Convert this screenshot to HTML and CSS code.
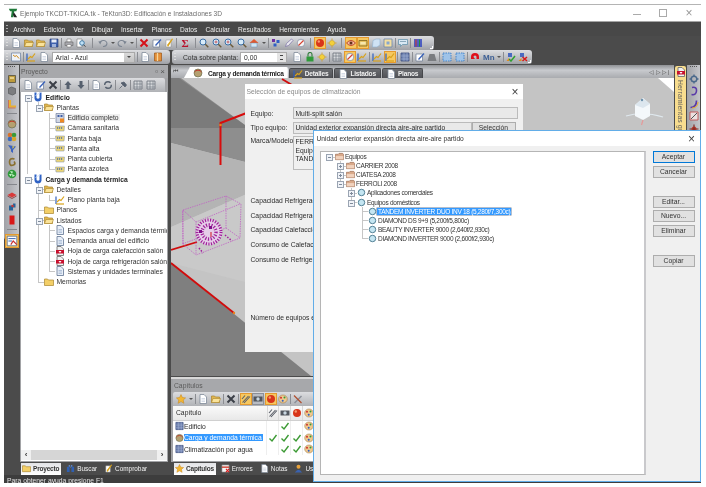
FILE: index.html
```html
<!DOCTYPE html>
<html lang="es">
<head>
<meta charset="utf-8">
<title>TeKton3D</title>
<link rel="stylesheet" href="styles.css">
</head>
<body>
<svg class="defs" aria-hidden="true">
  <symbol id="doc" viewBox="0 0 10 10"><path d="M2 .5h4l2.5 2.500v6.500h-6.500z" fill="#fff" stroke="#7f8a99" stroke-width=".8"/><path d="M3.500 4.500h3.500M3.500 6h3.500M3.500 7.500h3.500" stroke="#b8c4d6" stroke-width=".6"/></symbol>
  <symbol id="ldoc" viewBox="0 0 10 10"><path d="M2 .5h4l2.500 2.500v6.500h-6.500z" fill="#e9eff8" stroke="#5f7493" stroke-width=".8"/><path d="M3.500 4.500h3.500M3.500 6h3.500M3.500 7.500h3.500" stroke="#8ea4c6" stroke-width=".6"/></symbol>
  <symbol id="rdoc" viewBox="0 0 10 10"><path d="M2 .5h4l2.500 2.500v6.500h-6.500z" fill="#f2f2f2" stroke="#666" stroke-width=".8"/><path d="M1 4h8v3.500h-8z" fill="#c8102e"/><path d="M3.500 5l1.500 2 1.500-2z" fill="#fff"/></symbol>
  <symbol id="fold" viewBox="0 0 10 10"><path d="M.5 2h3l1 1h5v5.500h-9z" fill="#f3cf68" stroke="#a9852e" stroke-width=".7"/></symbol>
  <symbol id="open" viewBox="0 0 10 10"><path d="M.5 2h3l1 1h4v5.500h-8z" fill="#e0b650" stroke="#a9852e" stroke-width=".7"/><path d="M2 4.500h7.500l-1.500 4h-7.500z" fill="#fae39a" stroke="#a9852e" stroke-width=".6"/></symbol>
  <symbol id="pfold" viewBox="0 0 10 10"><path d="M.5 2.500h3l1-1h4l1 1v6h-9z" fill="#d9a98a" stroke="#96684e" stroke-width=".7"/><path d="M.8 4.500h8.400v3.700h-8.400z" fill="#f1d2bd"/></symbol>
  <symbol id="save" viewBox="0 0 10 10"><path d="M1 1h8v8h-8z" fill="#3f61ad" stroke="#23386e" stroke-width=".6"/><path d="M2.500 1.500h5v3h-5z" fill="#e8edf7"/><path d="M3 6h4v3h-4z" fill="#9fb3dc"/></symbol>
  <symbol id="print" viewBox="0 0 10 10"><path d="M3 1h4v3h-4z" fill="#fff" stroke="#777" stroke-width=".6"/><path d="M1 4h8v3.500h-8z" fill="#a8a8ae" stroke="#666" stroke-width=".6"/><path d="M3 6.500h4v2.500h-4z" fill="#fff" stroke="#777" stroke-width=".6"/></symbol>
  <symbol id="prev" viewBox="0 0 10 10"><path d="M1 1h5v8h-5z" fill="#fff" stroke="#777" stroke-width=".6"/><circle cx="6" cy="5" r="2.300" fill="#bfe0f5" stroke="#2a6a9a" stroke-width=".8"/><path d="M7.500 6.700l2 2" stroke="#444" stroke-width="1"/></symbol>
  <symbol id="undo" viewBox="0 0 10 10"><path d="M2 5a3.500 3 0 1 1 3 3.500" fill="none" stroke="#7c8592" stroke-width="1.100"/><path d="M.3 3.500l3.500-.5-1.500 3.500z" fill="#7c8592"/></symbol>
  <symbol id="redo" viewBox="0 0 10 10"><path d="M8 5a3.500 3 0 1 0-3 3.500" fill="none" stroke="#7c8592" stroke-width="1.100"/><path d="M9.700 3.500l-3.500-.5 1.500 3.500z" fill="#7c8592"/></symbol>
  <symbol id="xr" viewBox="0 0 10 10"><path d="M1.500 1.500l7 7M8.500 1.500l-7 7" stroke="#d5121a" stroke-width="2"/></symbol>
  <symbol id="xd" viewBox="0 0 10 10"><path d="M1.500 1.500l7 7M8.500 1.500l-7 7" stroke="#3c4048" stroke-width="2"/></symbol>
  <symbol id="edit" viewBox="0 0 10 10"><path d="M1 2h6.500v7h-6.500z" fill="#fff" stroke="#6a7a94" stroke-width=".7"/><path d="M3 7l5.500-6 1 1-5.500 6z" fill="#3b63b8"/></symbol>
  <symbol id="chk" viewBox="0 0 10 10"><path d="M2 2h5v7h-5z" fill="#fff" stroke="#888" stroke-width=".5"/><path d="M3 7l1 2 5-8-1-.500z" fill="#d8a21a"/></symbol>
  <symbol id="gchk" viewBox="0 0 10 10"><path d="M1.500 5.500l2.500 2.500 4.500-6" fill="none" stroke="#3c9a34" stroke-width="1.400"/></symbol>
  <symbol id="zoom" viewBox="0 0 10 10"><circle cx="4" cy="4" r="3" fill="#d8ecfa" stroke="#3a6ea5" stroke-width="1"/><path d="M6.300 6.300l3 3" stroke="#6a5a3a" stroke-width="1.400"/></symbol>
  <symbol id="zoomp" viewBox="0 0 10 10"><circle cx="4" cy="4" r="3" fill="#d8ecfa" stroke="#3a6ea5" stroke-width="1"/><path d="M6.300 6.300l3 3" stroke="#6a5a3a" stroke-width="1.400"/><path d="M2.500 4h3M4 2.500v3" stroke="#c03030" stroke-width=".7"/></symbol>
  <symbol id="home" viewBox="0 0 10 10"><path d="M.5 5l4.500-4 4.500 4" fill="#e05a30"/><path d="M2 5h6v4h-6z" fill="#cfe6f5" stroke="#6a8fae" stroke-width=".5"/></symbol>
  <symbol id="color" viewBox="0 0 10 10"><path d="M1 1h3v3h-3z" fill="#7030a0"/><path d="M5.500 2h3v3h-3z" fill="#2f5fc4"/><path d="M2.500 5.500h3v3h-3z" fill="#2f5fc4"/></symbol>
  <symbol id="pen" viewBox="0 0 10 10"><path d="M1.500 8.500l1-3 5-4.500 1.500 1.500-4.500 5z" fill="#e9e9ef" stroke="#7a6ea5" stroke-width=".7"/></symbol>
  <symbol id="eras" viewBox="0 0 10 10"><circle cx="5" cy="5" r="3.800" fill="#f5f5f5" stroke="#7f8aa0" stroke-width=".7"/><path d="M2.500 7.500l5-5" stroke="#d84030" stroke-width="1.100"/></symbol>
  <symbol id="ball" viewBox="0 0 10 10"><circle cx="5" cy="5" r="4" fill="#d8351a"/><circle cx="3.800" cy="3.500" r="1.200" fill="#f39a70"/></symbol>
  <symbol id="sun" viewBox="0 0 10 10"><circle cx="5" cy="5" r="2.600" fill="#f4d03a" stroke="#c79a1a" stroke-width=".5"/><path d="M5 .5v1.500M5 8v1.500M.5 5h1.500M8 5h1.500" stroke="#d49a1a" stroke-width=".8"/></symbol>
  <symbol id="eye" viewBox="0 0 10 10"><path d="M.5 5q4.500-5 9 0q-4.500 5-9 0z" fill="#f6b7a0" stroke="#b23a20" stroke-width=".9"/><circle cx="5" cy="5" r="1.500" fill="#63301a"/></symbol>
  <symbol id="box" viewBox="0 0 10 10"><path d="M1 2.500h8v5.500h-8z" fill="#e4c060" stroke="#7f6420" stroke-width=".8"/><path d="M2.300 4h5.400v2.500h-5.400z" fill="#f7e7ae"/></symbol>
  <symbol id="cube" viewBox="0 0 10 10"><path d="M2 2.500l3-1.500h4v6l-3 2h-4.500z" fill="#cfe2f4" stroke="#8fb0cf" stroke-width=".6"/></symbol>
  <symbol id="lbox" viewBox="0 0 10 10"><path d="M1 1h8v8h-8z" fill="#f4dfa0" stroke="#6a86ad" stroke-width=".8"/><path d="M3.500 3.500h3v3h-3z" fill="#86a7cf"/></symbol>
  <symbol id="chat" viewBox="0 0 10 10"><path d="M.5 1.500h9v5h-5l-2 2v-2h-2z" fill="#d9e8f3" stroke="#5a8ca8" stroke-width=".7"/><path d="M2.500 3.500h5" stroke="#3d6a84" stroke-width="1" stroke-dasharray="1 1"/></symbol>
  <symbol id="lay" viewBox="0 0 10 10"><path d="M1 2h8M1 4h8M1 6h8M1 8h8" stroke="#2a3fc0" stroke-width="1.300"/><path d="M3 1.500v7" stroke="#d03030" stroke-width="1"/><path d="M6.500 1.500v7" stroke="#209040" stroke-width="1"/></symbol>
  <symbol id="plan" viewBox="0 0 10 10"><path d="M.5 1h9v8h-9z" fill="#eef2f8" stroke="#6b7f9e" stroke-width=".7"/><path d="M2 3l2 1.500 1.500-1 2.500 3" fill="none" stroke="#d08a1a" stroke-width="1"/></symbol>
  <symbol id="chart" viewBox="0 0 10 10"><path d="M1 9v-7.500" stroke="#3060c0" stroke-width="1.200"/><path d="M1 9h8" stroke="#d8a21a" stroke-width="1.200"/><path d="M2 7l2.500-2.500 1.500 1 3-4" fill="none" stroke="#d8a21a" stroke-width="1.200"/></symbol>
  <symbol id="book" viewBox="0 0 10 10"><path d="M1.500 1h7v8h-7z" fill="#e4903a" stroke="#9c5616" stroke-width=".7"/><path d="M4.500 1v8" stroke="#f6d59a" stroke-width="1.300"/></symbol>
  <symbol id="lock" viewBox="0 0 10 10"><path d="M1.500 4.500h7v5h-7z" fill="#2f9a3a"/><path d="M3 4.500v-2a2 2 0 0 1 4 0v2" fill="none" stroke="#2f7a3a" stroke-width="1.100"/></symbol>
  <symbol id="arr" viewBox="0 0 10 10"><path d="M5 1l3.500 4h-2v4h-3v-4h-2z" fill="#56606e"/></symbol>
  <symbol id="arrd" viewBox="0 0 10 10"><path d="M5 9l3.500-4h-2v-4h-3v4h-2z" fill="#56606e"/></symbol>
  <symbol id="refr" viewBox="0 0 10 10"><circle cx="5" cy="5" r="3.300" fill="none" stroke="#56606e" stroke-width="1.400" stroke-dasharray="8 2"/></symbol>
  <symbol id="pin" viewBox="0 0 10 10"><path d="M1.500 8.500l3-3M3 3l4 4 1.500-2-2.500-3z" fill="#56606e" stroke="#56606e" stroke-width=".8"/></symbol>
  <symbol id="grid" viewBox="0 0 10 10"><path d="M1 1h8v8h-8z" fill="#d8dadd" stroke="#6a6f78" stroke-width=".8"/><path d="M1 4h8M1 7h8M4 1v8M7 1v8" stroke="#6a6f78" stroke-width=".6"/></symbol>
  <symbol id="bgrid" viewBox="0 0 10 10"><path d="M1 1h8v8h-8z" fill="#6f82b0" stroke="#3d4f80" stroke-width=".8"/><path d="M1 4h8M1 7h8M4 1v8M7 1v8" stroke="#a9b8d8" stroke-width=".5"/></symbol>
  <symbol id="mag" viewBox="0 0 10 10"><path d="M1 5a4 4 0 0 1 8 0v2h-2.500v-2a1.500 1.500 0 0 0-3 0l1.500 2h-4z" fill="#e0101a"/></symbol>
  <symbol id="bdash" viewBox="0 0 10 10"><path d="M1 1h8v8h-8z" fill="#9fc3e8" stroke="#3a7fc8" stroke-width=".9" stroke-dasharray="1.500 1"/></symbol>
  <symbol id="gray" viewBox="0 0 10 10"><path d="M2.500 2h5l2 7h-9z" fill="#7a7c80"/></symbol>
  <symbol id="redx" viewBox="0 0 10 10"><path d="M2 1h4v4h-4z" fill="#4a6ac0"/><path d="M4.500 5l4.500 4M9 5l-4.500 4" stroke="#d81818" stroke-width="1.500"/><path d="M.5 9h3v-3z" fill="#e08a20"/></symbol>
  <symbol id="grnc" viewBox="0 0 10 10"><path d="M2 1h4v4h-4z" fill="#4a6ac0"/><path d="M3 7l2 2 4-5" fill="none" stroke="#2fa030" stroke-width="1.500"/><path d="M.5 9h2.500v-3z" fill="#e08a20"/></symbol>
  <symbol id="bld" viewBox="0 0 10 10"><path d="M1 .5h8v9h-8z" fill="#d2d8e4" stroke="#5a6c90" stroke-width=".6"/><path d="M2.500 2h2v2h-2zM5.500 2h2v2h-2z" fill="#3e5fa8"/><path d="M5 5.500h4v4h-4z" fill="#ef8a24"/></symbol>
  <symbol id="planta" viewBox="0 0 10 10"><path d="M.5 3h9l-.5 5h-8z" fill="#eed673" stroke="#8a9ab2" stroke-width=".6"/><path d="M2 5h6" stroke="#4e6fa8" stroke-width="1.400" stroke-dasharray="1.200 .8"/></symbol>
  <symbol id="proj" viewBox="0 0 10 10"><path d="M1.500 .5h2v5.500q1.500 1.500 3 0v-5.500h2v6q-.5 3-3.500 3t-3.500-3z" fill="#2f62c4"/><path d="M2.500 3.500l5-3" stroke="#cfe0fa" stroke-width=".9"/></symbol>
  <symbol id="node" viewBox="0 0 10 10"><circle cx="5" cy="5" r="3.600" fill="#c5e6f2" stroke="#43748a" stroke-width="1"/></symbol>
  <symbol id="star" viewBox="0 0 10 10"><path d="M5 .5l1.400 3 3.200.4-2.400 2.100.7 3.300-2.900-1.700-2.900 1.700.7-3.300-2.400-2.100 3.200-.4z" fill="#f2b632" stroke="#c78418" stroke-width=".5"/></symbol>
  <symbol id="tag" viewBox="0 0 10 10"><path d="M1 1h8v8h-8z" fill="#f4f4f4" stroke="#777" stroke-width=".6"/><path d="M1 3.500h8" stroke="#cf3a2a" stroke-width="1.500"/><path d="M5.500 5.500l3.500 3.500M9 5.500l-3.500 3.500" stroke="#d81818" stroke-width="1.200"/></symbol>
  <symbol id="usr" viewBox="0 0 10 10"><circle cx="5" cy="3" r="2.200" fill="#e8a23a"/><path d="M1 9.500q4-6 8 0z" fill="#3a62b0"/></symbol>
  <symbol id="bino" viewBox="0 0 10 10"><path d="M1 3h3v6h-3zM6 3h3v6h-3z" fill="#2f5fb0"/><path d="M3 1h1.500v3h1v-3h1.500v2h-4z" fill="#5c86cc"/></symbol>
  <symbol id="tools" viewBox="0 0 10 10"><path d="M1 8.500l7-7 1 1-7 7z" fill="#8a8f98"/><path d="M1 1.500l7.500 7.500" stroke="#b05030" stroke-width="1.200"/></symbol>
  <symbol id="clip" viewBox="0 0 10 10"><path d="M1.500 8.500l6-6.500M3 9l6-6.500M1 5l3-3.500" stroke="#5a5f68" stroke-width="1.100"/></symbol>
  <symbol id="film" viewBox="0 0 10 10"><path d="M.5 2.500h9v5h-9z" fill="#51565e"/><circle cx="5" cy="5" r="1.700" fill="#c8d6e0"/></symbol>
  <symbol id="pal" viewBox="0 0 10 10"><ellipse cx="5" cy="5" rx="4.300" ry="4" fill="#efc98e" stroke="#96703a" stroke-width=".5"/><circle cx="3" cy="3.800" r="1" fill="#d02f2f"/><circle cx="6.500" cy="3.500" r="1" fill="#2f9a3f"/><circle cx="4.700" cy="6.700" r="1" fill="#2f5fc4"/></symbol>
  <symbol id="sBrick" viewBox="0 0 10 10"><path d="M1.500 1.500h7v7h-7z" fill="#bc9a3c" stroke="#5f5a48" stroke-width=".9"/><path d="M3 3h4v2h-4z" fill="#e6cd84"/></symbol>
  <symbol id="sCube" viewBox="0 0 10 10"><path d="M1.500 2.500l3-1.500 4 1.500v5l-3 1.500-4-1.500z" fill="#7c7d80" stroke="#4c4d50" stroke-width=".6"/></symbol>
  <symbol id="sPipe" viewBox="0 0 10 10"><path d="M3 1v6.500h6" fill="none" stroke="#e8b032" stroke-width="2"/><path d="M1.500 1v8h7" fill="none" stroke="#cf5a3a" stroke-width=".7"/></symbol>
  <symbol id="sGauge" viewBox="0 0 10 10"><circle cx="5" cy="5" r="4" fill="#b4a070" stroke="#6a6f50" stroke-width=".7"/><path d="M1.500 4a4 3.500 0 0 1 7 0" fill="none" stroke="#bf3a2a" stroke-width="1"/></symbol>
  <symbol id="sMulti" viewBox="0 0 10 10"><circle cx="3" cy="3" r="2.300" fill="#d8722a"/><circle cx="7" cy="3" r="2.300" fill="#3a9a3a"/><circle cx="3" cy="7" r="2.300" fill="#3a6ac0"/><circle cx="7" cy="7" r="2.300" fill="#d8a52a"/></symbol>
  <symbol id="sFan" viewBox="0 0 10 10"><circle cx="5" cy="5" r="4.300" fill="#2f9a3a"/><path d="M5 5l-2-3 3 .5zM5 5l3 1.500-2.500 1.500zM5 5l-1.500 2.500-1.500-2.500z" fill="#bff0c0"/></symbol>
  <symbol id="sCoil" viewBox="0 0 10 10"><path d="M7.500 2q-5-1.500-5 3t4 3q2.500-1 .5-3.500" fill="none" stroke="#8a7030" stroke-width="1.700"/></symbol>
  <symbol id="sFun" viewBox="0 0 10 10"><path d="M1 1l8 1.500-3 3.500v3l-2-1.500v-2z" fill="#3a62c0"/><path d="M5.500 2l2 .5-2 2.500z" fill="#e8c840"/></symbol>
  <symbol id="sDuct" viewBox="0 0 10 10"><path d="M.5 5l4.500-2.500 4.500 2.500-4.500 2.500z" fill="#d83a3a"/><path d="M.5 6l4.500 2.500 4.500-2.500" fill="none" stroke="#8a3030" stroke-width=".8"/></symbol>
  <symbol id="sBlue" viewBox="0 0 10 10"><path d="M2 3.500h4v-2h2.500v4h-2.500v3h-4z" fill="#28659a"/><circle cx="5.500" cy="4" r="1.300" fill="#c03a3a"/></symbol>
  <symbol id="sRed" viewBox="0 0 10 10"><path d="M2.500 .5h5v9h-5z" fill="#d81818"/></symbol>
  <symbol id="sChk" viewBox="0 0 10 10"><path d="M1 1h8v8h-8z" fill="#fff" stroke="#5a6a8a" stroke-width=".7"/><path d="M2 3h6M2 5h3" stroke="#3060b0" stroke-width=".8"/><path d="M4 8l2-3 3 3" fill="none" stroke="#c83030" stroke-width="1"/></symbol>
  <symbol id="gear" viewBox="0 0 10 10"><circle cx="5" cy="5" r="2.800" fill="none" stroke="#4c6a8c" stroke-width="1.500"/><path d="M5 .5v2M5 7.500v2M.5 5h2M7.500 5h2" stroke="#4c6a8c" stroke-width="1.400"/></symbol>
  <symbol id="hook" viewBox="0 0 10 10"><path d="M3 1.500q5-1 4.500 3.500t-5 3.500" fill="none" stroke="#5a3aa8" stroke-width="1.600"/></symbol>
  <symbol id="hook2" viewBox="0 0 10 10"><path d="M1.500 8.500q6 0 6-7" fill="none" stroke="#5a3aa8" stroke-width="1.700"/><path d="M3 9q6-.5 6-6" fill="none" stroke="#e8a820" stroke-width="1"/></symbol>
  <symbol id="rbox" viewBox="0 0 10 10"><path d="M1 1h8v8h-8z" fill="#ece0e0" stroke="#c05050" stroke-width=".9"/><path d="M2 8l6-6" stroke="#444" stroke-width=".9"/></symbol>
  <symbol id="flow" viewBox="0 0 10 10"><circle cx="5" cy="5" r="2.500" fill="#c83a2a"/><path d="M5 .5v9M.5 5h9" stroke="#7f2f2a" stroke-width="1.200"/></symbol>
</svg>

<div class="window">
  <header class="titlebar">
    <svg class="logo" viewBox="0 0 12 12"><path d="M1 1h10l-1 3h-2.500l-1 7h-3l1-7h-2z" fill="#1f7a3a"/><path d="M7 5l4 6h-3.500l-1.500-3z" fill="#222"/></svg>
    <span class="title">Ejemplo TKCDT-TKICA.tk - TeKton3D: Edificación e Instalaciones 3D</span>
    <span class="winbtns">
      <span class="wb wb-min"></span><span class="wb wb-max"></span><span class="wb wb-close">×</span>
    </span>
  </header>

  <nav class="menubar">
    <span class="grip"></span>
    <span>Archivo</span><span>Edición</span><span>Ver</span><span>Dibujar</span><span>Insertar</span><span>Planos</span><span>Datos</span><span>Calcular</span><span>Resultados</span><span>Herramientas</span><span>Ayuda</span>
  </nav>

  <div class="tbrow">
    <div class="band band-1">
      <span class="grip"></span>
      <svg class="ic"><use href="#doc"/></svg><svg class="ic"><use href="#open"/></svg><svg class="ic"><use href="#open"/></svg><svg class="ic"><use href="#save"/></svg>
      <i class="sep"></i>
      <svg class="ic"><use href="#print"/></svg><svg class="ic tight"><use href="#prev"/></svg>
      <i class="sep w"></i>
      <svg class="ic"><use href="#undo"/></svg><b class="dd"></b><svg class="ic"><use href="#redo"/></svg><b class="dd"></b>
      <i class="sep"></i>
      <svg class="ic"><use href="#xr"/></svg><svg class="ic"><use href="#edit"/></svg><svg class="ic"><use href="#chk"/></svg>
      <i class="sep"></i>
      <span class="sigma">Σ</span>
      <i class="sep m"></i>
      <svg class="ic"><use href="#zoom"/></svg><svg class="ic"><use href="#zoomp"/></svg><svg class="ic"><use href="#zoomp"/></svg><svg class="ic"><use href="#zoom"/></svg><svg class="ic"><use href="#home"/></svg><b class="dd"></b>
      <i class="sep"></i>
      <svg class="ic"><use href="#color"/></svg><svg class="ic"><use href="#pen"/></svg><svg class="ic"><use href="#eras"/></svg>
      <i class="sep m"></i>
      <svg class="ic on"><use href="#ball"/></svg><svg class="ic"><use href="#sun"/></svg>
      <i class="sep m"></i>
      <svg class="ic on"><use href="#eye"/></svg><svg class="ic on"><use href="#box"/></svg><svg class="ic"><use href="#cube"/></svg><svg class="ic"><use href="#lbox"/></svg>
      <i class="sep"></i>
      <svg class="ic"><use href="#chat"/></svg>
      <i class="sep"></i>
      <svg class="ic"><use href="#lay"/></svg>
      <b class="corner"></b>
    </div>
  </div>

  <div class="tbrow">
    <div class="band band-2">
      <span class="grip"></span>
      <svg class="ic"><use href="#plan"/></svg>
      <i class="sep"></i>
      <svg class="ic"><use href="#chart"/></svg><svg class="ic"><use href="#doc"/></svg>
      <span class="combo"><span>Arial - Azul</span><b class="combo-btn"></b></span>
      <i class="sep"></i>
      <svg class="ic"><use href="#doc"/></svg><svg class="ic"><use href="#book"/></svg>
    </div>
    <div class="band band-3">
      <span class="grip"></span>
      <span class="cota">Cota sobre planta:</span>
      <span class="numinput">0,00<b class="spin"></b></span>
      <svg class="ic"><use href="#doc"/></svg><svg class="ic"><use href="#lock"/></svg><svg class="ic"><use href="#sun"/></svg>
      <i class="sep"></i>
      <svg class="ic"><use href="#grid"/></svg><svg class="ic on"><use href="#eras"/></svg><svg class="ic"><use href="#chart"/></svg>
      <i class="sep"></i>
      <svg class="ic"><use href="#chart"/></svg><svg class="ic on"><use href="#chart"/></svg>
      <i class="sep"></i>
      <svg class="ic"><use href="#bgrid"/></svg>
      <i class="sep"></i>
      <svg class="ic"><use href="#edit"/></svg><svg class="ic"><use href="#gray"/></svg>
      <i class="sep"></i>
      <svg class="ic"><use href="#bdash"/></svg><svg class="ic"><use href="#bdash"/></svg>
      <i class="sep"></i>
      <svg class="ic"><use href="#mag"/></svg>
      <span class="km">Mn</span><b class="dd"></b>
      <i class="sep"></i>
      <svg class="ic"><use href="#grnc"/></svg><svg class="ic"><use href="#redx"/></svg>
      <b class="corner"></b>
    </div>
  </div>

  <div class="workspace">
    <aside class="strip strip-left">
      <span class="handle"></span>
      <svg class="ic"><use href="#sBrick"/></svg><svg class="ic"><use href="#sCube"/></svg><svg class="ic"><use href="#sPipe"/></svg>
      <i class="hsep"></i>
      <svg class="ic"><use href="#sGauge"/></svg><svg class="ic"><use href="#sMulti"/></svg><svg class="ic"><use href="#sFun"/></svg><svg class="ic"><use href="#sCoil"/></svg><svg class="ic"><use href="#sFan"/></svg>
      <i class="hsep"></i>
      <svg class="ic"><use href="#sDuct"/></svg><svg class="ic"><use href="#sBlue"/></svg><svg class="ic"><use href="#sRed"/></svg>
      <i class="hsep"></i>
      <svg class="ic on big"><use href="#sChk"/></svg>
    </aside>

    <section class="panel project">
      <div class="panel-title"><span>Proyecto</span><span class="panel-ctl">▫ ×</span></div>
      <div class="paneltools">
        <svg class="ic"><use href="#doc"/></svg><svg class="ic"><use href="#edit"/></svg><svg class="ic"><use href="#xd"/></svg>
        <i class="sep"></i>
        <svg class="ic"><use href="#arr"/></svg><svg class="ic"><use href="#arrd"/></svg>
        <i class="sep"></i>
        <svg class="ic"><use href="#doc"/></svg><svg class="ic"><use href="#refr"/></svg>
        <i class="sep"></i>
        <svg class="ic"><use href="#pin"/></svg>
        <i class="sep"></i>
        <svg class="ic"><use href="#grid"/></svg><svg class="ic"><use href="#grid"/></svg>
      </div>
      <div class="treebox">
        <ul class="tree project-tree">
          <li><div class="node strong"><span class="exp minus"></span><svg class="ic"><use href="#proj"/></svg>Edificio</div>
            <ul>
              <li><div class="node"><span class="exp minus"></span><svg class="ic"><use href="#open"/></svg>Plantas</div>
                <ul>
                  <li><div class="node"><span class="exp"></span><svg class="ic"><use href="#bld"/></svg><span class="current">Edificio completo</span></div></li>
                  <li><div class="node"><span class="exp"></span><svg class="ic"><use href="#planta"/></svg>Cámara sanitaria</div></li>
                  <li><div class="node"><span class="exp"></span><svg class="ic"><use href="#planta"/></svg>Planta baja</div></li>
                  <li><div class="node"><span class="exp"></span><svg class="ic"><use href="#planta"/></svg>Planta alta</div></li>
                  <li><div class="node"><span class="exp"></span><svg class="ic"><use href="#planta"/></svg>Planta cubierta</div></li>
                  <li><div class="node"><span class="exp"></span><svg class="ic"><use href="#planta"/></svg>Planta azotea</div></li>
                </ul>
              </li>
            </ul>
          </li>
          <li><div class="node strong"><span class="exp minus"></span><svg class="ic"><use href="#proj"/></svg>Carga y demanda térmica</div>
            <ul>
              <li><div class="node"><span class="exp minus"></span><svg class="ic"><use href="#open"/></svg>Detalles</div>
                <ul>
                  <li><div class="node"><span class="exp"></span><svg class="ic"><use href="#chart"/></svg>Plano planta baja</div></li>
                </ul>
              </li>
              <li><div class="node"><span class="exp"></span><svg class="ic"><use href="#fold"/></svg>Planos</div></li>
              <li><div class="node"><span class="exp minus"></span><svg class="ic"><use href="#open"/></svg>Listados</div>
                <ul>
                  <li><div class="node"><span class="exp"></span><svg class="ic"><use href="#ldoc"/></svg>Espacios carga y demanda térmica</div></li>
                  <li><div class="node"><span class="exp"></span><svg class="ic"><use href="#ldoc"/></svg>Demanda anual del edificio</div></li>
                  <li><div class="node"><span class="exp"></span><svg class="ic"><use href="#rdoc"/></svg>Hoja de carga calefacción salón</div></li>
                  <li><div class="node"><span class="exp"></span><svg class="ic"><use href="#rdoc"/></svg>Hoja de carga refrigeración salón</div></li>
                  <li><div class="node"><span class="exp"></span><svg class="ic"><use href="#ldoc"/></svg>Sistemas y unidades terminales</div></li>
                </ul>
              </li>
              <li><div class="node"><span class="exp"></span><svg class="ic"><use href="#fold"/></svg>Memorias</div></li>
            </ul>
          </li>
        </ul>
        <div class="hscroll"><b>‹</b><i></i><b>›</b></div>
      </div>
      <div class="dock-tabs">
        <span class="dtab active"><svg class="ic"><use href="#fold"/></svg>Proyecto</span>
        <span class="dtab"><svg class="ic"><use href="#bino"/></svg>Buscar</span>
        <span class="dtab"><svg class="ic"><use href="#chk"/></svg>Comprobar</span>
      </div>
    </section>

    <main class="center">
      <div class="doctabs">
        <span class="navfirst">⏮</span>
        <span class="doctab active"><svg class="ic"><use href="#sGauge"/></svg>Carga y demanda térmica</span>
        <span class="doctab"><svg class="ic"><use href="#chart"/></svg>Detalles</span>
        <span class="doctab"><svg class="ic"><use href="#doc"/></svg>Listados</span>
        <span class="doctab"><svg class="ic"><use href="#doc"/></svg>Planos</span>
        <span class="tabnav">◁ ▷ ▷|</span>
      </div>
      <div class="view">
        <svg class="scene" viewBox="172 78 503 298" preserveAspectRatio="none">
          <rect x="172" y="78" width="503" height="298" fill="#c4c4c4"/>
          <path d="M172 78h10l68 50v35l-78-20z" fill="#8e8e8e"/>
          <path d="M172 78h8l70 50-78 0z" fill="#7b7b7b"/>
          <path d="M172 143l78 20v30l-78 34z" fill="#b4b4b4"/>
          <path d="M172 227l78-34v90l-78-20z" fill="#c9c9c9"/>
          <path d="M172 263l140 113h-140z" fill="#7f7f7f"/>
          <path d="M659 78h16v14z" fill="#fff"/>
          <path d="M172 263l63 50" stroke="#d00c0c" stroke-width="1.800"/>
          <circle cx="235" cy="313" r="1.200" fill="#e8801a"/>
          <path d="M172 250l26-8" stroke="#d00c0c" stroke-width="1.800"/>
          <path d="M221.500 165v-42l26-10" fill="none" stroke="#d80c0c" stroke-width="2"/>
          <circle cx="221.500" cy="125" r="1.300" fill="#e8801a"/>
          <path d="M283 79l10 6" stroke="#d00c0c" stroke-width="2"/>
          <g fill="none" stroke="#c060c4" stroke-width=".8" stroke-dasharray="1.400 1">
            <path d="M184 210l43-14 15 8-1 34-44 17-13-11zM184 210l13 12v32M197 222l44-18M184 244l-.500-34M227 196v32l-44 16M227 228l14 10"/>
          </g>
          <circle cx="210" cy="232" r="13" fill="#e5cde8"/>
          <circle cx="210" cy="232" r="12" fill="none" stroke="#a0209a" stroke-width="3" stroke-dasharray="1.200 1.400"/>
          <circle cx="210" cy="232" r="7" fill="none" stroke="#a0209a" stroke-width="3.500" stroke-dasharray="1.200 1.500"/>
          <path d="M200 230h3v3h-3zM210 226h3v3h-3z" fill="#80108a"/>
          <path d="M212 232v5" stroke="#d01020" stroke-width="1"/>
          <path d="M226 235l7 6M200 248l4 5" stroke="#a0209a" stroke-width="1.500" stroke-dasharray="1.500 1.500"/>
          <path d="M627 116q17-5 37 1" fill="none" stroke="#dfe8ee" stroke-width="1.200"/>
          <path d="M636 105l8-7 7 6v12l-7 4-8-4z" fill="#f4f8fb"/>
          <path d="M644 98l7 6-7 4-8-3z" fill="#dce6ee"/>
          <path d="M644 120l-1.500 5" stroke="#e59a9a" stroke-width="1.200"/>
          <circle cx="643" cy="100" r="1.200" fill="#6d92ad"/>
        </svg>
      </div>
      <div class="divider"></div>
      <section class="panel chapters">
        <div class="panel-title"><span>Capítulos</span></div>
        <div class="paneltools">
          <svg class="ic"><use href="#star"/></svg><b class="dd"></b>
          <i class="sep"></i>
          <svg class="ic"><use href="#doc"/></svg><svg class="ic"><use href="#open"/></svg>
          <i class="sep"></i>
          <svg class="ic"><use href="#xd"/></svg>
          <i class="sep"></i>
          <svg class="ic on"><use href="#clip"/></svg><svg class="ic sel"><use href="#film"/></svg><svg class="ic on"><use href="#ball"/></svg><svg class="ic"><use href="#pal"/></svg>
          <i class="sep"></i>
          <svg class="ic"><use href="#tools"/></svg>
        </div>
        <table class="chaptable">
          <thead>
            <tr><th class="cname">Capítulo</th><th><svg class="ic"><use href="#clip"/></svg></th><th><svg class="ic"><use href="#film"/></svg></th><th><svg class="ic"><use href="#ball"/></svg></th><th><svg class="ic"><use href="#pal"/></svg></th></tr>
          </thead>
          <tbody>
            <tr><td class="cname"><svg class="ic"><use href="#bgrid"/></svg>Edificio</td><td></td><td><svg class="ic"><use href="#gchk"/></svg></td><td></td><td><svg class="ic"><use href="#pal"/></svg></td></tr>
            <tr><td class="cname"><svg class="ic"><use href="#sGauge"/></svg><span class="hl">Carga y demanda térmica</span></td><td><svg class="ic"><use href="#gchk"/></svg></td><td><svg class="ic"><use href="#gchk"/></svg></td><td><svg class="ic"><use href="#gchk"/></svg></td><td><svg class="ic"><use href="#pal"/></svg></td></tr>
            <tr><td class="cname"><svg class="ic"><use href="#bgrid"/></svg>Climatización por agua</td><td></td><td><svg class="ic"><use href="#gchk"/></svg></td><td><svg class="ic"><use href="#gchk"/></svg></td><td><svg class="ic"><use href="#pal"/></svg></td></tr>
          </tbody>
        </table>
        <div class="dock-tabs">
          <span class="dtab active"><svg class="ic"><use href="#star"/></svg>Capítulos</span>
          <span class="dtab"><svg class="ic"><use href="#tag"/></svg>Errores</span>
          <span class="dtab"><svg class="ic"><use href="#doc"/></svg>Notas</span>
          <span class="dtab"><svg class="ic"><use href="#usr"/></svg>Usuarios</span>
        </div>
      </section>
    </main>

    <aside class="sidetab">
      <svg class="ic"><use href="#rdoc"/></svg>
      <span class="vtext">Herramientas gráficas</span>
    </aside>
    <aside class="strip strip-right">
      <span class="handle"></span>
      <svg class="ic"><use href="#gear"/></svg><svg class="ic"><use href="#hook"/></svg><svg class="ic"><use href="#hook2"/></svg><svg class="ic"><use href="#rbox"/></svg><svg class="ic"><use href="#flow"/></svg>
    </aside>
  </div>

  <footer class="status">Para obtener ayuda presione F1</footer>

  <div class="dlg dlg-select">
    <div class="dlg-title"><span>Selección de equipos de climatización</span><span class="dlg-x">×</span></div>
    <div class="dlg-body form">
      <div class="frow"><label>Equipo:</label><span class="field">Multi-split salón</span></div>
      <div class="frow"><label>Tipo equipo:</label><span class="field">Unidad exterior expansión directa aire-aire partido</span><span class="btn btn-sel">Selección</span></div>
      <div class="frow frow-tall"><label>Marca/Modelo:</label><span class="field memo">FERROLI 2008<br>Equipos domésticos<br>TANDEM INVERTER DUO INV 18</span></div>
      <div class="specs">
        <p>Capacidad Refrigeración total</p>
        <p>Capacidad Refrigeración sensible</p>
        <p>Capacidad Calefacción</p>
        <p>Consumo de Calefacción</p>
        <p>Consumo de Refrigeración</p>
      </div>
      <p class="count">Número de equipos en paralelo</p>
    </div>
  </div>

  <div class="dlg dlg-unit">
    <div class="dlg-title"><span>Unidad exterior expansión directa aire-aire partido</span><span class="dlg-x">×</span></div>
    <div class="dlg-body unit">
      <div class="unit-tree">
        <ul class="tree compact">
          <li><div class="node"><span class="exp minus"></span><svg class="ic"><use href="#pfold"/></svg>Equipos</div>
            <ul>
              <li><div class="node"><span class="exp plus"></span><svg class="ic"><use href="#pfold"/></svg>CARRIER 2008</div></li>
              <li><div class="node"><span class="exp plus"></span><svg class="ic"><use href="#pfold"/></svg>CIATESA 2008</div></li>
              <li><div class="node"><span class="exp minus"></span><svg class="ic"><use href="#pfold"/></svg>FERROLI 2008</div>
                <ul>
                  <li><div class="node"><span class="exp plus"></span><svg class="ic"><use href="#node"/></svg>Aplicaciones comerciales</div></li>
                  <li><div class="node"><span class="exp minus"></span><svg class="ic"><use href="#node"/></svg>Equipos domésticos</div>
                    <ul>
                      <li><div class="node"><span class="exp"></span><svg class="ic"><use href="#node"/></svg><span class="picked">TANDEM INVERTER DUO INV 18 (5,280f/7,300c)</span></div></li>
                      <li><div class="node"><span class="exp"></span><svg class="ic"><use href="#node"/></svg>DIAMOND DS 9+9 (5,200f/5,800c)</div></li>
                      <li><div class="node"><span class="exp"></span><svg class="ic"><use href="#node"/></svg>BEAUTY INVERTER 9000 (2,640f/2,930c)</div></li>
                      <li><div class="node"><span class="exp"></span><svg class="ic"><use href="#node"/></svg>DIAMOND INVERTER 9000 (2,600f/2,930c)</div></li>
                    </ul>
                  </li>
                </ul>
              </li>
            </ul>
          </li>
        </ul>
      </div>
      <div class="unit-btns">
        <span class="btn default">Aceptar</span>
        <span class="btn">Cancelar</span>
        <span class="btn gap-a">Editar...</span>
        <span class="btn">Nuevo...</span>
        <span class="btn">Eliminar</span>
        <span class="btn gap-b">Copiar</span>
      </div>
    </div>
  </div>
</div>
</body>
</html>
```

FILE: styles.css
```css
* { box-sizing: border-box; }
html, body { margin: 0; height: 100%; background: #fff; overflow: hidden; }
body { padding: 4px 5px 4px 4px; font-family: "Liberation Sans", sans-serif; font-size: 6.750px; color: #2c2c2c; }
.defs { display: none; }
ul { list-style: none; margin: 0; padding: 0; }
p { margin: 0; }

.window { position: relative; height: 479px; display: flex; flex-direction: column; background: #4b4b4b; overflow: hidden; filter: blur(.4px); }

.ic { width: 10px; height: 10px; flex: none; margin: 0 1.250px; display: block; }
.ic.on { background: #f6c860; outline: 1px solid #e49a30; outline-offset: 0; }
.ic.sel { background: #b8bcc4; outline: 1px solid #8b8f98; }

.titlebar { height: 18px; flex: none; display: flex; align-items: center; background: #fff; border-top: 1px solid #b4b4b4; border-bottom: 1px solid #a5a5a5; padding-left: 4px; }
.logo { width: 10px; height: 10px; margin-right: 2px; flex: none; }
.title { color: #6d6d6d; font-size: 6.600px; }
.winbtns { margin-left: auto; display: flex; align-items: center; gap: 18px; padding-right: 8px; }
.wb { width: 8px; height: 8px; display: block; color: #999; }
.wb-min { border-bottom: 1px solid #aaa; height: 6px; align-self: flex-start; }
.wb-max { border: 1px solid #aaa; }
.wb-close { font-size: 12px; line-height: 8px; text-align: center; font-weight: 400; }

.menubar { height: 14px; flex: none; display: flex; align-items: center; gap: 8.300px; color: #eee; background: #484848; padding-left: 2px; font-size: 6.600px; }
.grip { width: 2px; height: 9px; flex: none; background: repeating-linear-gradient(#ddd 0 1px, transparent 1px 3px); margin: 0 2px 0 0; }
.menubar .grip { margin-right: -3px; background: repeating-linear-gradient(#aaa 0 1px, transparent 1px 3px); }

.tbrow { height: 14px; flex: none; display: flex; gap: 2px; }
.band { height: 14px; display: flex; align-items: center; padding-left: 2px; background: linear-gradient(#dcdde0, #bcbec2 55%, #9fa1a6); border-radius: 0 3px 3px 0; position: relative; }
.band-1 { width: 430px; }
.band-2 { width: 166px; }
.band-3 { width: 360px; border-radius: 3px; }
.sep { width: 1px; height: 10px; flex: none; background: #8b8d92; margin: 0 .750px; }
.sep.m { margin: 0 2.500px; }
.sep.w { margin: 0 4px; }
.dd { width: 0; height: 0; flex: none; margin: 0 1.500px; border: 2px solid transparent; border-top: 2.500px solid #555; border-bottom: 0; }
.corner { position: absolute; right: 1px; bottom: 1px; width: 3px; height: 3px; border-right: 1px solid #fff; border-bottom: 1px solid #fff; }
.sigma { width: 10px; margin: 0 2px; text-align: center; font-size: 11px; line-height: 10px; font-weight: 700; color: #b80f2a; font-family: "Liberation Serif", serif; }
.combo { width: 83px; height: 11px; margin: 0 2px 0 1.500px; background: #fff; border: 1px solid #a8a8a8; display: flex; align-items: center; padding-left: 3px; color: #333; }
.combo-btn { margin-left: auto; width: 10px; height: 9px; background: #d8d8da linear-gradient(#dadada, #c2c2c2); position: relative; }
.combo-btn::after { content: ""; position: absolute; left: 3px; top: 3.500px; border: 2px solid transparent; border-top: 2.500px solid #444; border-bottom: 0; }
.cota { width: 54px; flex: none; margin: 0 3px 0 5px; white-space: nowrap; color: #333; }
.numinput { width: 47px; height: 11px; margin-right: 4px; background: #fff; border: 1px solid #aaa; display: flex; align-items: center; padding-left: 3px; position: relative; }
.spin { margin-left: auto; width: 9px; height: 9px; background: linear-gradient(#444 0 0) center 2px / 3px 1px no-repeat, linear-gradient(#444 0 0) center 6px / 3px 1px no-repeat, #e4e4e4; }
.km { width: 12px; font-size: 8px; font-weight: 700; color: #3c5f95; margin-left: 2px; }

.workspace { height: 410px; flex: none; margin-top: 1px; display: flex; background: #4b4b4b; min-height: 0; }
.strip { width: 15px; flex: none; display: flex; flex-direction: column; align-items: center; gap: 2.600px; background: linear-gradient(90deg, #a0a1a6, #c5c6ca); padding-top: 1px; }
.strip-left { height: 175px; border-radius: 0 0 3px 3px; }
.strip-right { width: 13px; }
.strip .ic { margin: 0; }
.handle { width: 8px; height: 1px; flex: none; margin: 0 0 4px; background: repeating-linear-gradient(90deg, #555 0 1px, transparent 1px 2px); }
.hsep { width: 10px; height: 1px; flex: none; margin: 2px 0; background: #85878c; }
.ic.big { width: 12px; height: 12px; }

.panel { display: flex; flex-direction: column; background: #a2a3a6; }
.project { width: 148px; flex: none; margin-left: 1px; }
.panel-title { height: 13px; flex: none; display: flex; align-items: center; justify-content: space-between; padding: 0 3px 0 1px; color: #5b5b5b; background: #a7a8ab; }
.panel-ctl { font-size: 8px; color: #555; }
.paneltools { height: 14px; flex: none; display: flex; align-items: center; margin-right: 3px; padding-left: 2px; background: linear-gradient(#dcdde0, #b0b2b6); border-radius: 2px 2px 0 0; }
.treebox { flex: 1; min-height: 0; margin: 0 1px; background: #fff; display: flex; flex-direction: column; overflow: hidden; }
.tree { flex: 1; min-height: 0; overflow: hidden; padding-left: .500px; white-space: nowrap; }
.tree ul { padding-left: 11px; }
.tree li { position: relative; }
.tree li::before { content: ""; position: absolute; left: 5.500px; top: 0; bottom: 0; width: 1px; background: #c6c6c6; }
.tree li::after { content: ""; position: absolute; left: 5.500px; top: 5px; width: 6px; height: 1px; background: #c6c6c6; }
.tree li:last-child::before { bottom: auto; height: 5px; }
.tree > li:first-child::before { top: 5px; }
.tree > li:last-child::before { display: none; }
.node { position: relative; z-index: 1; height: 10.250px; display: flex; align-items: center; color: #333; }
.node .ic { margin: 0 3px 0 0; background: #fff; }
.node.strong { font-weight: 700; color: #222; }
.exp { width: 11px; height: 100%; flex: none; position: relative; }
.exp.minus::before, .exp.plus::before { content: ""; position: absolute; left: 3px; top: 2.500px; width: 5px; height: 5px; border: 1px solid #9aa4b2; background: linear-gradient(#7f8a9a 0 0) center / 3px 1px no-repeat, #f0f3f8; }
.exp.plus::before { background: linear-gradient(#7f8a9a 0 0) center / 3px 1px no-repeat, linear-gradient(#7f8a9a 0 0) center / 1px 3px no-repeat, #f0f3f8; }
.current { background: #f0f0f0; padding-right: 1px; }
.hscroll { height: 10px; flex: none; display: flex; align-items: center; background: #d6d6d6; margin-bottom: 1px; color: #333; font-size: 8px; line-height: 10px; }
.hscroll b { width: 10px; text-align: center; background: #f0f0f0; }
.hscroll i { flex: 1; }
.dock-tabs { height: 13px; flex: none; display: flex; align-items: center; gap: 4px; padding-left: 1px; color: #f2f2f2; background: #4b4b4b; margin-top: 1px; }
.dtab { display: flex; align-items: center; padding: 0 2px 0 1px; height: 12px; font-size: 6.400px; }
.dtab .ic { width: 9px; height: 9px; margin: 0 2px 0 0; }
.dtab.active { background: linear-gradient(#e2e3e6, #fff); color: #333; font-weight: 700; font-size: 6.500px; letter-spacing: -.2px; }

.center { width: 503px; flex: none; margin-left: 3px; display: flex; flex-direction: column; min-height: 0; }
.doctabs { height: 13px; flex: none; display: flex; align-items: flex-end; gap: 1px; padding-left: 13px; background: linear-gradient(#8f9195, #c8cace 40%, #a9abaf); position: relative; color: #f1f1f1; }
.navfirst { position: absolute; left: 2px; top: 3px; font-size: 6px; color: #555; }
.doctab { display: flex; align-items: center; height: 10px; padding: 0 4px 0 3px; background: linear-gradient(#6a6c70, #505156); border: 1px solid #47484c; border-bottom: 0; border-radius: 2px 2px 0 0; font-weight: 700; font-size: 6.600px; letter-spacing: -.2px; white-space: nowrap; }
.doctab .ic { margin: 0 2px 0 0; }
.doctab.active { background: #fff; border-color: #fff; color: #222; height: 11px; padding: 0 3px 0 8px; clip-path: polygon(6px 0, 100% 0, 100% 100%, 0 100%); }
.doctab.active .ic { margin-right: 5px; border-radius: 50%; }
.tabnav { margin-left: auto; align-self: center; padding-right: 5px; font-size: 6px; color: #555; }
.view { height: 298px; flex: none; overflow: hidden; }
.scene { display: block; width: 503px; height: 298px; }
.divider { height: 3px; flex: none; background: linear-gradient(#4b4b4b 0 1.500px, #d8d8d8 1.500px); }
.chapters { flex: 1; min-height: 0; padding-left: 2px; }
.chapters .paneltools { width: 300px; }
.chaptable { width: 142px; border-collapse: collapse; background: #fff; table-layout: fixed; flex: none; }
.chapters .chaptable { height: 55px; margin-bottom: auto; display: block; }
.chaptable th { height: 14px; background: linear-gradient(#fafafa, #e8e8e8); border-right: 1px solid #d8d8d8; border-bottom: 1px solid #d0d0d0; font-weight: 400; text-align: left; padding: 0; width: 13.500px; }
.chaptable td { height: 11.500px; padding: 0; width: 13.500px; border-right: 1px solid #eee; white-space: nowrap; color: #2a2a2a; }
.chaptable .ic { margin: 0 auto; }
.chaptable th.cname { width: 94px; padding-left: 3px; }
.chaptable td.cname { width: 94px; display: flex; align-items: center; height: 11.500px; }
.chaptable td.cname .ic { margin: 0 0 0 2px; width: 9px; }
.hl { background: #3399ff; color: #fff; padding-right: 1px; }
.chapters .dock-tabs { margin: 1px 0 0 -2px; padding-left: 3px; }

.sidetab { width: 11px; flex: none; margin: 1px 1px 0 1px; background: #f8dd8e; border-radius: 2px; height: 90px; overflow: hidden; display: flex; flex-direction: column; align-items: center; padding-top: 1px; gap: 3px; }
.sidetab .ic { margin: 0; }
.vtext { writing-mode: vertical-rl; color: #5b5b5b; letter-spacing: .200px; white-space: nowrap; }

.status { flex: 1; min-height: 0; padding: 2px 0 0 3px; color: #e4e4e4; background: #3d3d3d; white-space: nowrap; }

.dlg { position: absolute; display: flex; flex-direction: column; background: #f0f0f0; }
.dlg-title { height: 15px; flex: none; display: flex; align-items: center; justify-content: space-between; background: #fff; padding: 0 4px 0 2px; }
.dlg-x { font-size: 12px; line-height: 12px; color: #444; }
.dlg-body { flex: 1; min-height: 0; }
.dlg-select { left: 240.500px; top: 80px; width: 278px; height: 268px; }
.dlg-select .dlg-title { color: #8b8b8b; font-size: 6.750px; }
.form { padding: 8px 5px 0 6px; }
.frow { display: flex; align-items: center; height: 12px; margin-bottom: 2.500px; position: relative; }
.frow label { width: 42px; flex: none; }
.field { flex: 1; height: 12px; display: flex; align-items: center; padding-left: 2px; background: #e9e9e9; border: 1px solid #bbb; white-space: nowrap; overflow: hidden; }
.frow-tall { height: 34px; align-items: flex-start; }
.frow-tall label { padding-top: 1px; }
.memo { flex: 1; height: 34px; display: block; background: #f0f0f0; line-height: 8.500px; padding-top: 1px; }
.btn { display: block; height: 12px; line-height: 10px; text-align: center; background: #e1e1e1; border: 1px solid #adadad; color: #333; }
.btn-sel { width: 44px; flex: none; margin-right: 2px; }
.specs { margin-top: 26px; display: flex; flex-direction: column; gap: 4.700px; }
.specs p { height: 10px; line-height: 10px; white-space: nowrap; }
.count { margin-top: 48px; height: 10px; line-height: 10px; white-space: nowrap; }

.dlg-unit { left: 308.500px; top: 126px; width: 388.500px; height: 352px; border: 1px solid #62ade8; }
.dlg-unit .dlg-title { color: #333; font-size: 6.650px; padding: 0 5px 0 3px; }
.unit { display: flex; padding: 5px 7px 6px 6px; }
.unit-tree { width: 326px; flex: none; background: #fff; border: 1px solid #b5b5b5; border-right: 2px solid #c9c9cc; padding: 0 0 0 2px; overflow: hidden; }
.tree.compact li::after { top: 4.500px; }
.tree.compact li:last-child::before { height: 4.500px; }
.compact .node { height: 9.120px; font-size: 6.500px; letter-spacing: -.300px; }
.compact .exp.minus::before, .compact .exp.plus::before { top: 2px; }
.compact .node .ic { width: 9px; height: 9px; margin: 0 1.500px 0 .500px; }
.picked { background: #3399ff; color: #fff; padding: 0 1px; margin-left: -1px; box-shadow: 0 0 0 .500px #6b7f99; }
.unit-btns { margin-left: 7px; width: 42px; flex: none; display: flex; flex-direction: column; gap: 2.500px; }
.btn.default { border: 1px solid #0078d7; outline: .500px solid #0078d7; outline-offset: -1.500px; }
.gap-a { margin-top: 15.500px; }
.gap-b { margin-top: 15.500px; }
```
